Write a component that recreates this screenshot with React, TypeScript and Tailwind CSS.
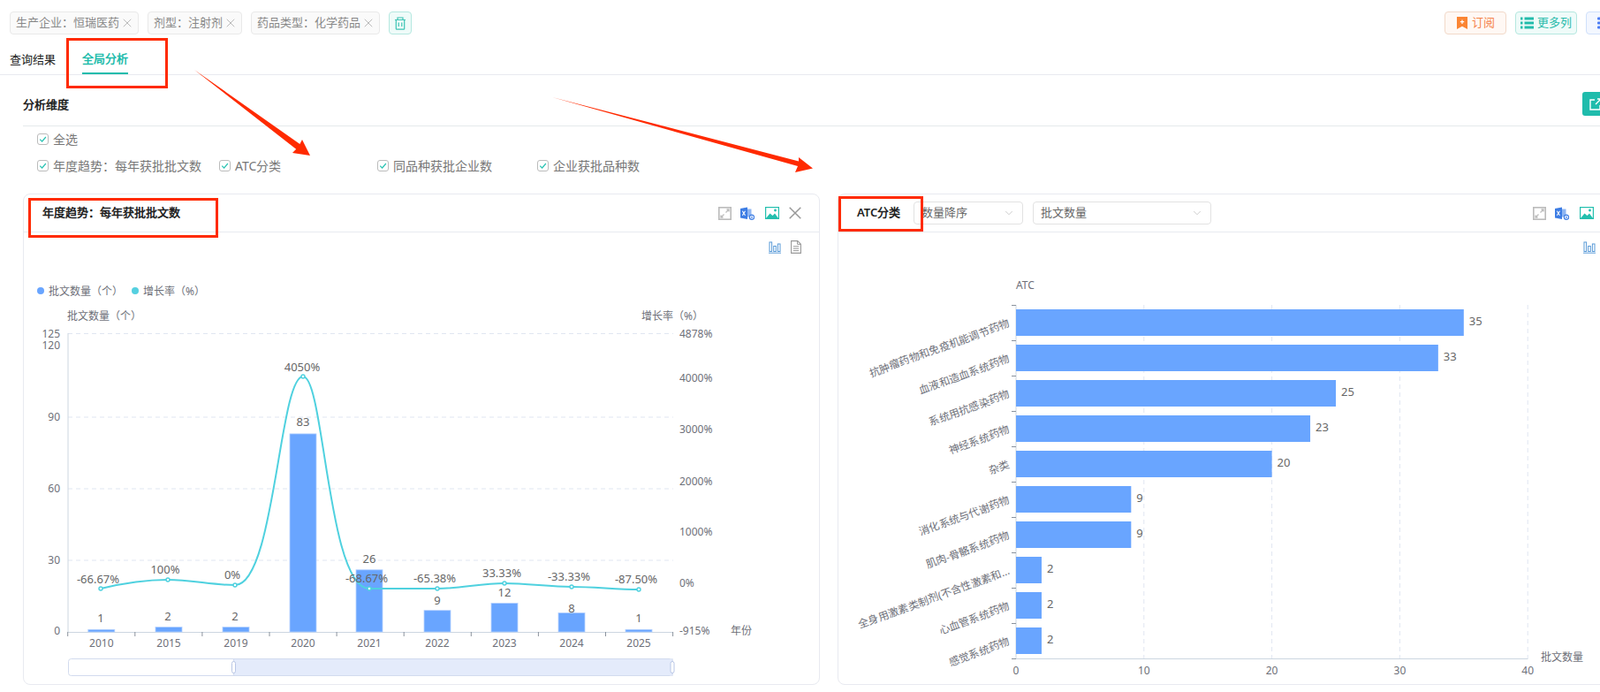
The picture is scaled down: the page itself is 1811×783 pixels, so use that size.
import { ChevronDown, X } from 'lucide-react'

const years = [
  { name: '2010', x: 114.8, v: 1, lx: 114, ly: 699 },
  { name: '2015', x: 191, v: 2, lx: 190, ly: 697 },
  { name: '2019', x: 267, v: 2, lx: 266, ly: 697 },
  { name: '2020', x: 343, v: 83, lx: 343, ly: 477 },
  { name: '2021', x: 418, v: 26, lx: 418, ly: 632 },
  { name: '2022', x: 495, v: 9, lx: 495, ly: 679 },
  { name: '2023', x: 571, v: 12, lx: 571, ly: 670 },
  { name: '2024', x: 647, v: 8, lx: 647, ly: 688 },
  { name: '2025', x: 723, v: 1, lx: 723, ly: 699 },
]

const rates = [
  { t: '-66.67%', x: 114, y: 666, lx: 111, ly: 655 },
  { t: '100%', x: 190, y: 656, lx: 187, ly: 644 },
  { t: '0%', x: 266, y: 662, lx: 263, ly: 650 },
  { t: '4050%', x: 343, y: 426, lx: 342, ly: 415 },
  { t: '-68.67%', x: 418, y: 666, lx: 415, ly: 654 },
  { t: '-65.38%', x: 495, y: 666, lx: 492, ly: 654 },
  { t: '33.33%', x: 571, y: 660, lx: 568, ly: 648 },
  { t: '-33.33%', x: 647, y: 664, lx: 644, ly: 652 },
  { t: '-87.50%', x: 723, y: 667, lx: 720, ly: 655 },
]

const atc = [
  { name: '抗肿瘤药物和免疫机能调节药物', v: 35 },
  { name: '血液和造血系统药物', v: 33 },
  { name: '系统用抗感染药物', v: 25 },
  { name: '神经系统药物', v: 23 },
  { name: '杂类', v: 20 },
  { name: '消化系统与代谢药物', v: 9 },
  { name: '肌肉-骨骼系统药物', v: 9 },
  { name: '全身用激素类制剂(不含性激素和...', v: 2 },
  { name: '心血管系统药物', v: 2 },
  { name: '感觉系统药物', v: 2 },
]

function Tag({ label }: { label: string }) {
  return (
    <div className="h-[26px] flex items-center gap-[1px] pl-[6px] pr-[4px] bg-[#fafafa] border border-[#e9e9e9] rounded-[4px] text-[13px] text-[#888]">
      {label}
      <X size={16} strokeWidth={1.5} className="text-[#bbb]" />
    </div>
  )
}

function Check({ label, className }: { label: string; className?: string }) {
  return (
    <div className={`flex items-center gap-[5px] text-[14px] text-[#777] ${className ?? ''}`}>
      <span className="w-[13px] h-[13px] rounded-[3px] border border-[#bbb] flex items-center justify-center">
        <svg width="9" height="9" viewBox="0 0 9 9" fill="none">
          <path d="M1.2 4.6 3.6 7 7.9 2" stroke="#2cc4b4" strokeWidth="1.2" />
        </svg>
      </span>
      {label}
    </div>
  )
}

function ExpandIcon() {
  return (
    <svg width="15" height="15" viewBox="0 0 15 15" fill="none">
      <rect x="0.8" y="0.8" width="13.4" height="13.4" stroke="#bbb" strokeWidth="1.6" />
      <path d="M8.5 6.5 12 3M9.5 3H12V5.5" stroke="#bdbdbd" strokeWidth="1.3" />
      <path d="M6.5 8.5 3 12M5.5 12H3V9.5" stroke="#bdbdbd" strokeWidth="1.3" />
    </svg>
  )
}

function ExcelIcon() {
  return (
    <svg width="16" height="15" viewBox="0 0 16 15" fill="none">
      <path d="M0 2 8 0.5V14L0 12.5Z" fill="#3d7de4" />
      <rect x="8" y="2.5" width="4.5" height="9" fill="#8fb6f2" />
      <path d="M2.3 4.8 5.5 9.8M5.5 4.8 2.3 9.8" stroke="#fff" strokeWidth="1.1" />
      <circle cx="13" cy="11.8" r="2.6" fill="#fff" stroke="#3d7de4" strokeWidth="1.2" />
      <path d="M13 10.6V13" stroke="#3d7de4" strokeWidth="1.1" />
    </svg>
  )
}

function PictureIcon() {
  return (
    <svg width="16" height="14" viewBox="0 0 16 14" fill="none">
      <rect x="0.6" y="0.6" width="14.8" height="12.8" stroke="#23bfae" strokeWidth="1.2" />
      <path d="M1 13 5.5 7.5 8.5 10 11 7.5 15 13Z" fill="#23bfae" />
      <circle cx="11.5" cy="4" r="1.4" fill="#23bfae" />
    </svg>
  )
}

function BarsIcon() {
  return (
    <svg width="14" height="15" viewBox="0 0 14 15" fill="none">
      <rect x="1" y="2" width="2.6" height="10.5" stroke="#5a9bd8" />
      <rect x="5.7" y="6.5" width="2.6" height="6" stroke="#5a9bd8" />
      <rect x="10.4" y="4" width="2.6" height="8.5" stroke="#5a9bd8" />
      <path d="M0 14.2H14" stroke="#5a9bd8" />
    </svg>
  )
}

function DocIcon() {
  return (
    <svg width="12" height="15" viewBox="0 0 12 15" fill="none">
      <path d="M0.6 0.6H7.8L11.4 4.2V14.4H0.6Z" stroke="#999" strokeWidth="1.1" />
      <path d="M7.6 0.8V4.4H11.2M2.8 6.8H9.2M2.8 9.2H9.2M2.8 11.6H9.2" stroke="#999" />
    </svg>
  )
}

function Select({ label, className }: { label: string; className: string }) {
  return (
    <div className={`h-[26px] flex items-center justify-between pl-[8px] pr-[8px] border border-[#e2e2e2] rounded-[4px] text-[13px] text-[#666] ${className}`}>
      {label}
      <ChevronDown size={14} strokeWidth={1} className="text-[#aaa]" />
    </div>
  )
}

function TrendChart() {
  return (
    <svg width="900" height="511" viewBox="27 263 900 511" className="block">
      <circle cx="46" cy="329" r="4" fill="#69a5ff" />
      <text x="55" y="329" dominantBaseline="central" className="text-[12px] fill-[#6e7079]">批文数量（个）</text>
      <circle cx="153" cy="329" r="4" fill="#55d0e0" />
      <text x="162" y="329" dominantBaseline="central" className="text-[12px] fill-[#6e7079]">增长率（%）</text>
      <text x="76" y="357" dominantBaseline="central" className="text-[12px] fill-[#6e7079]">批文数量（个）</text>
      <text x="726" y="357" dominantBaseline="central" className="text-[12px] fill-[#6e7079]">增长率（%）</text>

      {[377.5, 472, 553, 634].map((y) => (
        <line key={y} x1="77" x2="762" y1={y} y2={y} stroke="#e0e6f1" strokeDasharray="5 4" />
      ))}
      <line x1="77" x2="77" y1="377" y2="715" stroke="#ccd6e0" />
      <line x1="77" x2="762" y1="715.5" y2="715.5" stroke="#ccd6e0" />
      {[0, 1, 2, 3, 4, 5, 6, 7, 8, 9].map((i) => (
        <line key={i} x1={76.7 + i * 76.1} x2={76.7 + i * 76.1} y1="715" y2="720" stroke="#8a929c" />
      ))}

      {[
        ['125', 377],
        ['120', 390],
        ['90', 471],
        ['60', 552],
        ['30', 633],
        ['0', 713],
      ].map(([t, y]) => (
        <text key={t} x="68" y={y} textAnchor="end" dominantBaseline="central" className="text-[12px] fill-[#6e7079]">{t}</text>
      ))}
      {[
        ['4878%', 377],
        ['4000%', 427],
        ['3000%', 485],
        ['2000%', 544],
        ['1000%', 601],
        ['0%', 659],
        ['-915%', 713],
      ].map(([t, y]) => (
        <text key={t} x="769" y={y} dominantBaseline="central" className="text-[12px] fill-[#6e7079]">{t}</text>
      ))}
      <text x="827" y="713" dominantBaseline="central" className="text-[12px] fill-[#6e7079]">年份</text>

      {years.map((d) => (
        <g key={d.name}>
          <rect x={d.x - 15} y={715 - d.v * 2.7} width="30" height={d.v * 2.7} fill="#69a5ff" stroke="#b4d1ff" strokeWidth="0.8" />
          <text x={d.lx} y={d.ly} textAnchor="middle" dominantBaseline="central" className="text-[13px] fill-[#666]">{d.v}</text>
          <text x={d.x} y="727" textAnchor="middle" dominantBaseline="central" className="text-[12px] fill-[#6e7079]">{d.name}</text>
        </g>
      ))}

      <path
        d="M114,666 C139,660 165,656 190,656 C216,656 241,662 266,662 C311,662 316,426 343,426 C367,426 371,666 418,666 C444,666 469,666 495,666 C520,666 545,660 571,660 C597,660 622,664 647,664 C672,664 698,667 723,667"
        fill="none"
        stroke="#4fd1df"
        strokeWidth="2"
      />
      {rates.map((d) => (
        <g key={d.t}>
          <circle cx={d.x} cy={d.y} r="2" fill="#fff" stroke="#4fd1df" strokeWidth="1.4" />
          <text x={d.lx} y={d.ly} textAnchor="middle" dominantBaseline="central" className="text-[13px] fill-[#666]">{d.t}</text>
        </g>
      ))}

      <rect x="77.5" y="745.5" width="684" height="19" rx="3" fill="#fff" stroke="#d2dbee" />
      <rect x="264" y="746" width="497" height="18" fill="#e4ebfb" />
      <line x1="264.5" x2="264.5" y1="745" y2="765" stroke="#d2dbee" />
      <line x1="761" x2="761" y1="745" y2="765" stroke="#d2dbee" />
      <rect x="262.5" y="748.5" width="4" height="13" rx="2" fill="#fff" stroke="#b8c6e6" />
      <rect x="759" y="748.5" width="4" height="13" rx="2" fill="#fff" stroke="#b8c6e6" />
    </svg>
  )
}

function AtcChart() {
  const sx = (v: number) => 1150 + v * 14.48
  return (
    <svg width="900" height="511" viewBox="949 263 900 511" className="block">
      <text x="1150" y="322" dominantBaseline="central" className="text-[12px] fill-[#6e7079]">ATC</text>
      {[10, 20, 30, 40].map((v) => (
        <line key={v} x1={sx(v)} x2={sx(v)} y1="345" y2="745" stroke="#e0e6f1" strokeDasharray="5 4" />
      ))}
      <line x1="1150" x2="1150" y1="345" y2="745" stroke="#ccd6e0" />
      <line x1="1150" x2="1729.5" y1="745.5" y2="745.5" stroke="#ccd6e0" />
      {atc.map((_, i) => (
        <line key={i} x1="1145" x2="1150" y1={345.5 + i * 40} y2={345.5 + i * 40} stroke="#8a929c" />
      ))}
      <line x1="1145" x2="1150" y1="745.5" y2="745.5" stroke="#8a929c" />
      {atc.map((d, i) => {
        const mid = 365 + i * 40
        return (
          <g key={d.name}>
            <rect x="1150" y={mid - 15} width={d.v * 14.48} height="30" fill="#69a5ff" />
            <text x={sx(d.v) + 6} y={mid - 2.5} dominantBaseline="central" className="text-[13px] fill-[#666]">{d.v}</text>
            <text
              x="1142"
              y={mid}
              textAnchor="end"
              dominantBaseline="central"
              transform={`rotate(-20 1142 ${mid})`}
              className="text-[12px] fill-[#6e7079]"
            >
              {d.name}
            </text>
          </g>
        )
      })}
      {[0, 10, 20, 30, 40].map((v) => (
        <text key={v} x={sx(v)} y="758" textAnchor="middle" dominantBaseline="central" className="text-[12px] fill-[#6e7079]">{v}</text>
      ))}
      <text x="1744" y="743" dominantBaseline="central" className="text-[12px] fill-[#6e7079]">批文数量</text>
    </svg>
  )
}

function CardIcons() {
  return (
    <div className="ml-auto flex items-center">
      <ExpandIcon />
      <span className="ml-[10px]"><ExcelIcon /></span>
      <span className="ml-[12px]"><PictureIcon /></span>
      <svg width="14" height="14" viewBox="0 0 14 14" className="ml-[11px]">
        <path d="M0.7 0.7 13.3 13.3M13.3 0.7 0.7 13.3" stroke="#999" strokeWidth="1.5" />
      </svg>
    </div>
  )
}

function Toolbar() {
  return (
    <div className="absolute right-[20px] top-[52px] flex items-center gap-[11px]">
      <BarsIcon />
      <DocIcon />
    </div>
  )
}

export default function App() {
  return (
    <div lang="zh-CN" className="relative w-full h-[783px] overflow-hidden bg-white font-['Noto_Sans','Noto_Sans_CJK_SC',sans-serif]">
      {/* filters */}
      <div className="flex justify-between pt-[13px] pl-[11px] -mr-[54px]">
        <div className="flex gap-[10px]">
          <Tag label="生产企业：恒瑞医药" />
          <Tag label="剂型：注射剂" />
          <Tag label="药品类型：化学药品" />
          <button className="w-[26px] h-[26px] flex items-center justify-center bg-[#effbf9] border border-[#b5e8e0] rounded-[4px]">
            <svg width="14" height="15" viewBox="0 0 14 15" fill="none" stroke="#3cc4b4" strokeWidth="1.2">
              <path d="M1 3.5H13M4 3V1H10V3M2.3 3.5V13.5C2.3 14 2.7 14.2 3 14.2H11C11.4 14.2 11.7 14 11.7 13.5V3.5M5.2 6.5V11M8.8 6.5V11" />
            </svg>
          </button>
        </div>
        <div className="flex gap-[10px]">
          <button className="w-[70px] h-[26px] flex items-center justify-center gap-[5px] bg-[#fff8f4] border border-[#f2d9c9] rounded-[4px] text-[13px] text-[#f5824a]">
            <svg width="12" height="14" viewBox="0 0 12 14">
              <path d="M0 0H12V14L6 10.8 0 14Z" fill="#fb8533" />
              <path d="M6 3.5V8M3.8 5.7H8.2" stroke="#fff" strokeWidth="1.2" />
            </svg>
            订阅
          </button>
          <button className="w-[70px] h-[26px] flex items-center justify-center gap-[4px] bg-[#effbf9] border border-[#b5e8e0] rounded-[4px] text-[13px] text-[#2cbcac]">
            <svg width="15" height="14" viewBox="0 0 15 14" fill="#22bcab">
              <rect x="0" y="0.5" width="2.5" height="3" />
              <rect x="4.5" y="0.5" width="10.5" height="3" />
              <rect x="0" y="5.5" width="2.5" height="3" />
              <rect x="4.5" y="5.5" width="10.5" height="3" />
              <rect x="0" y="10.5" width="2.5" height="3" />
              <rect x="4.5" y="10.5" width="10.5" height="3" />
            </svg>
            更多列
          </button>
          <button className="w-[70px] h-[26px] flex items-center pl-[12px] bg-[#f3f7ff] border border-[#cfe0fb] rounded-[4px]">
            <svg width="14" height="14" viewBox="0 0 14 14" fill="#4a7cf5">
              <rect x="0" y="0.5" width="14" height="3" rx="1" />
              <rect x="0" y="5.5" width="14" height="3" rx="1" />
              <rect x="0" y="10.5" width="14" height="3" rx="1" />
            </svg>
          </button>
        </div>
      </div>

      {/* tabs */}
      <div className="h-[46px] flex border-b border-[#e8eaf0] pl-[11px] text-[13px]">
        <div className="h-[45px] flex items-center pt-[12px] text-[#222]">查询结果</div>
        <div className="ml-[30px] h-[45px] flex items-center pt-[13px] text-[#1fbcac] font-semibold border-b-2 border-[#1fbcac]">全局分析</div>
      </div>

      {/* analysis dimensions */}
      <div className="ml-[26px]">
        <div className="h-[58px] pt-[19px] flex items-start justify-between border-b border-[#e5e9ec] -mr-[20px]">
          <div className="mt-[5px] text-[13px] font-semibold text-[#222]">分析维度</div>
          <button className="w-[40px] h-[27px] flex items-center pl-[8px] bg-[#1fbcac] rounded-[3px]">
            <svg width="14" height="14" viewBox="0 0 14 14" fill="none" stroke="#fff" strokeWidth="1.4">
              <path d="M6 2H1V13H12V8M7 7 13 1M9 1H13V5" />
            </svg>
          </button>
        </div>
        <div className="pl-[16px] -mt-[1px]">
          <div className="h-[30px] flex items-center"><Check label="全选" /></div>
          <div className="h-[30px] flex items-center">
            <Check label="年度趋势：每年获批批文数" className="w-[206px]" />
            <Check label="ATC分类" className="w-[179px]" />
            <Check label="同品种获批企业数" className="w-[181px]" />
            <Check label="企业获批品种数" />
          </div>
        </div>
      </div>

      {/* charts */}
      <div className="mt-[17px] ml-[26px] flex gap-[20px]">
        <div className="relative shrink-0 w-[902px] h-[556px] border border-[#e8eaf0] rounded-[8px]">
          <div className="h-[43px] flex items-center pl-[21px] pr-[20px] border-b border-[#e8eaf0]">
            <div className="text-[13px] font-semibold text-[#222]">年度趋势：每年获批批文数</div>
            <CardIcons />
          </div>
          <Toolbar />
          <TrendChart />
        </div>
        <div className="relative shrink-0 w-[902px] h-[556px] border border-[#e8eaf0] rounded-[8px]">
          <div className="h-[43px] flex items-center pl-[21px] pr-[20px] border-b border-[#e8eaf0]">
            <div className="w-[50px] text-[13px] font-semibold text-[#222]">ATC分类</div>
            <Select label="数量降序" className="ml-[14px] w-[124px]" />
            <Select label="批文数量" className="ml-[11px] w-[202px]" />
            <CardIcons />
          </div>
          <Toolbar />
          <AtcChart />
        </div>
      </div>

      {/* red annotations drawn over the page */}
      <div className="absolute left-[75px] top-[43px] w-[115px] h-[57px] border-[3px] border-[#ff2a00]" />
      <div className="absolute left-[32px] top-[224px] w-[215px] h-[45px] border-[3px] border-[#ff2a00]" />
      <div className="absolute left-[949px] top-[222px] w-[96px] h-[40px] border-[3px] border-[#ff2a00]" />
      <svg width="1811" height="783" className="absolute left-0 top-0 pointer-events-none">
        <polygon points="220,79 339.4,163.1 342,158 351,176 331,173 335.2,168.7" fill="#ff2a00" />
        <polygon points="625,110 904,182.5 904,178 920,190.5 900,195 903,188" fill="#ff2a00" />
      </svg>
    </div>
  )
}
